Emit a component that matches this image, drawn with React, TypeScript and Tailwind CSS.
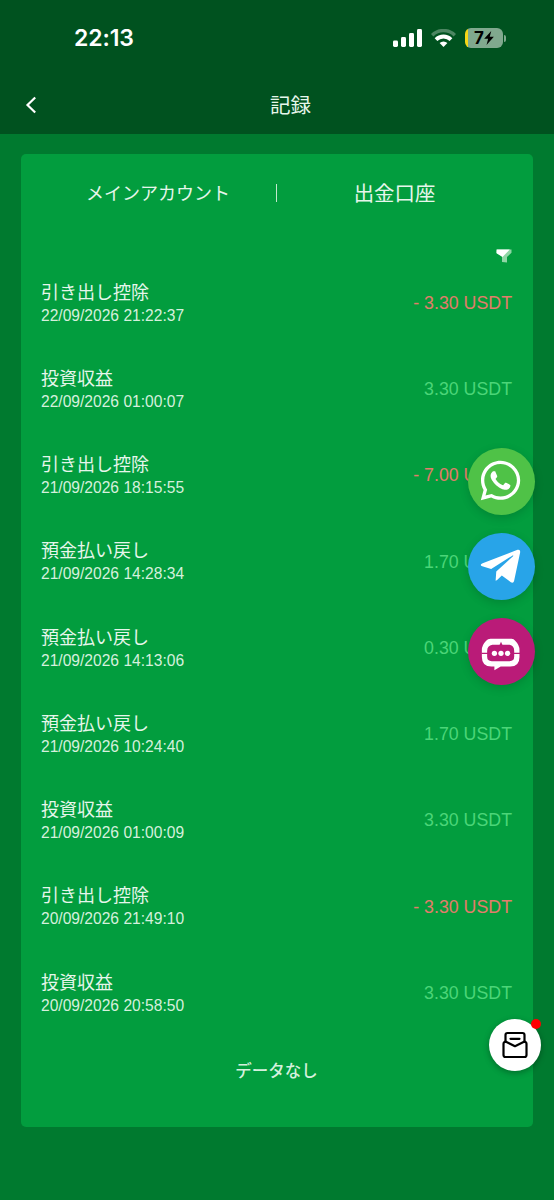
import type { ReactNode } from 'react'
import { FaTelegramPlane, FaWhatsapp } from 'react-icons/fa'

interface Transaction {
  title: string
  date: string
  amount: string
  negative?: boolean
}

const transactions: Transaction[] = [
  { title: '引き出し控除', date: '22/09/2026 21:22:37', amount: '3.30', negative: true },
  { title: '投資収益', date: '22/09/2026 01:00:07', amount: '3.30' },
  { title: '引き出し控除', date: '21/09/2026 18:15:55', amount: '7.00', negative: true },
  { title: '預金払い戻し', date: '21/09/2026 14:28:34', amount: '1.70' },
  { title: '預金払い戻し', date: '21/09/2026 14:13:06', amount: '0.30' },
  { title: '預金払い戻し', date: '21/09/2026 10:24:40', amount: '1.70' },
  { title: '投資収益', date: '21/09/2026 01:00:09', amount: '3.30' },
  { title: '引き出し控除', date: '20/09/2026 21:49:10', amount: '3.30', negative: true },
  { title: '投資収益', date: '20/09/2026 20:58:50', amount: '3.30' },
]

function StatusBar() {
  return (
    <div className="flex h-[76px] items-center justify-between pl-[74px] pr-[48px]">
      <span className="font-['Inter'] text-[23px] font-semibold leading-none tracking-[-0.1px] text-white">
        22:13
      </span>
      <div className="flex items-center">
        <svg width="29" height="18" viewBox="0 0 29 18" fill="#fff">
          <rect x="0" y="11.5" width="5" height="6.5" rx="1.4" />
          <rect x="8" y="8" width="5" height="10" rx="1.4" />
          <rect x="16" y="4" width="5" height="14" rx="1.4" />
          <rect x="24" y="0" width="5" height="18" rx="1.4" />
        </svg>
        <svg className="ml-[9px]" width="25" height="18" viewBox="0 0 25 18" fill="none" strokeWidth="3.4">
          <path d="M1.2 6.2a16 16 0 0 1 22.6 0" stroke="#fff" strokeOpacity=".3" />
          <path d="M5 10.6a10.6 10.6 0 0 1 15 0" stroke="#fff" strokeWidth="3.8" />
          <path d="M8.6 14.1a5.6 5.6 0 0 1 7.8 0L12.5 18z" fill="#fff" />
        </svg>
        <div className="ml-[9px] flex items-center gap-[1px]">
          <div className="flex h-[20px] w-[38px] items-center justify-center overflow-hidden rounded-[6px] bg-[linear-gradient(90deg,#f7d716_3px,#80a98e_3px)]">
            <span className="font-['Inter'] text-[17px] font-bold leading-none text-black">7</span>
            <svg width="10" height="14" viewBox="0 0 9 13" fill="#000">
              <path d="M6.6 0 0 7.3h3.7L2.2 13 9 5.3H5.2z" />
            </svg>
          </div>
          <div className="h-[7px] w-[2px] rounded-r-full bg-[#80a98e]" />
        </div>
      </div>
    </div>
  )
}

function Header() {
  return (
    <header className="h-[134px] bg-[#00521f]">
      <StatusBar />
      <div className="grid h-[58px] grid-cols-[27px_1fr] items-center pl-[25px]">
        <button type="button" aria-label="戻る">
          <svg width="12" height="18" viewBox="0 0 12 18" fill="none" stroke="#fff" strokeWidth="2.2">
            <path d="M10.2 1.5 2.5 9l7.7 7.5" />
          </svg>
        </button>
        <h1 className="pr-[25px] pt-[2px] text-center text-[20.5px] text-[#e6f6eb]">記録</h1>
      </div>
    </header>
  )
}

function TransactionRow({ title, date, amount, negative }: Transaction) {
  return (
    <li className="flex h-[86.25px] items-center justify-between">
      <div>
        <div className="pt-[1px] text-[18px] leading-[24px] text-[#e6f6eb]">{title}</div>
        <div className="text-[15.6px] leading-[22px] text-[#d5f0dd]">{date}</div>
      </div>
      <span className={`pr-[1px] text-[17.8px] ${negative ? 'text-[#e47c6b]' : 'text-[#4bd578]'}`}>
        {negative && '- '}
        {amount} USDT
      </span>
    </li>
  )
}

function ChatIcon() {
  return (
    <svg width="66" height="66" viewBox="0 0 200 200">
      <path
        d="M68 60h64q7 0 11 6q13 13 13 28v21q0 29-28 29H99L80 155v-11H71q-29 0-29-29V94q0-15 13-28q5-6 13-6zM74 78Q58 80 58 97v17q0 14 14 14h54q14 0 14-14V97q0-17-14-19z"
        fill="#fff"
        fillRule="evenodd"
      />
      <path d="M41 104h22M136 104h24" stroke="#ba1b78" strokeWidth="4" />
      <path d="m100 69-5 11h10z" fill="#ba1b78" />
      <circle cx="80" cy="104" r="8" fill="#fff" />
      <circle cx="100" cy="104" r="8" fill="#fff" />
      <circle cx="120" cy="104" r="8" fill="#fff" />
    </svg>
  )
}

function ContactButton({ label, className, children }: { label: string; className: string; children: ReactNode }) {
  return (
    <button
      type="button"
      aria-label={label}
      className={`flex size-[67px] items-center justify-center rounded-full text-white shadow-[0_3px_10px_rgba(0,0,0,0.15)] ${className}`}
    >
      {children}
    </button>
  )
}

export default function App() {
  return (
    <div className="relative h-[1200px] w-[554px] overflow-hidden bg-[#007a2f] font-['Liberation_Sans','Noto_Sans_CJK_JP',sans-serif]">
      <Header />

      <main className="mx-[21px] mt-[20px] flex h-[973px] flex-col rounded-[5px] bg-[#029d3e] px-5">
        {/* Account tabs */}
        <div className="flex h-[78px] items-center text-[#e6f6eb]">
          <div className="w-[235px] pl-[45px] pt-[2px] text-[18px]">メインアカウント</div>
          <div className="h-[18px] w-px bg-[#c3e8cd]" />
          <div className="flex-1 pr-[1px] pt-[2px] text-center text-[20.4px]">出金口座</div>
        </div>

        <div className="flex h-[28px] items-start justify-end pt-[17px]">
          <svg className="mr-[1px]" width="16" height="14" viewBox="0 0 16 14">
            <path d="M1 .5h14.500v3.200L11 8V13.500L6 13V7.500L.5 3.700z" fill="#8fd6a5" />
            <path d="M.5.5h13.300L6.500 8 .5 4.200z" fill="#fff" />
          </svg>
        </div>

        <ul>
          {transactions.map((item) => (
            <TransactionRow key={item.date} {...item} />
          ))}
        </ul>

        <p className="mt-[23px] pr-[1px] text-center text-[16.5px] font-medium leading-[24px] text-[#d5f0dd]">データなし</p>
      </main>

      {/* Floating contact buttons */}
      <div className="absolute left-[467.5px] top-[448px] flex flex-col gap-[18px]">
        <ContactButton label="WhatsApp" className="bg-[#4fc247]">
          <FaWhatsapp size={45} className="-translate-x-px -translate-y-px" />
        </ContactButton>
        <ContactButton label="Telegram" className="bg-[#28a4e8]">
          <FaTelegramPlane size={45} className="-translate-x-px" />
        </ContactButton>
        <ContactButton label="チャット" className="bg-[#ba1b78]">
          <ChatIcon />
        </ContactButton>
      </div>

      <button
        type="button"
        aria-label="メッセージ"
        className="absolute left-[489px] top-[1019px] flex size-[52px] items-center justify-center rounded-full bg-white shadow-[0_2px_6px_rgba(0,0,0,0.3)]"
      >
        <svg width="28" height="28" viewBox="0 0 28 28" fill="none" stroke="#000" strokeWidth="2.2" strokeLinejoin="round" strokeLinecap="round">
          <path d="M4.500 11V4a2 2 0 0 1 2-2h15a2 2 0 0 1 2 2v7" />
          <path d="M9.500 7.800h9" />
          <path d="M4.500 10.500 3.300 11.200a2 2 0 0 0-.8 1.500V24a2 2 0 0 0 2 2h19a2 2 0 0 0 2-2V12.700a2 2 0 0 0-.8-1.500l-1.200-.7L14 15.200z" />
        </svg>
        <span className="absolute right-0 top-0 size-[10px] rounded-full bg-[#fe0000]" />
      </button>
    </div>
  )
}
